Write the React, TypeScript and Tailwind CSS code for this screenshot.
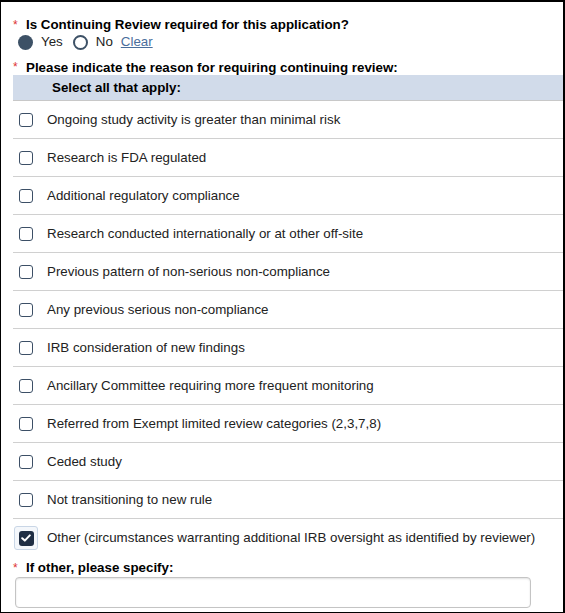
import { useState } from "react";

const reasons = [
  "Ongoing study activity is greater than minimal risk",
  "Research is FDA regulated",
  "Additional regulatory compliance",
  "Research conducted internationally or at other off-site",
  "Previous pattern of non-serious non-compliance",
  "Any previous serious non-compliance",
  "IRB consideration of new findings",
  "Ancillary Committee requiring more frequent monitoring",
  "Referred from Exempt limited review categories (2,3,7,8)",
  "Ceded study",
  "Not transitioning to new rule",
  "Other (circumstances warranting additional IRB oversight as identified by reviewer)",
];

function Check({ on }: { on: boolean }) {
  if (on) {
    return (
      <span className="flex h-[24px] w-[24px] items-center justify-center rounded-[3px] border border-[#c9d6e6] bg-[#f4f7fb]">
        <span className="flex h-[15px] w-[15px] items-center justify-center rounded-[3px] bg-[#1f2e44]">
          <svg width="10" height="8" viewBox="0 0 10 8" fill="none">
            <path d="M1.2 4.2 L3.8 6.6 L8.8 1.4" stroke="white" strokeWidth="2" strokeLinecap="round" strokeLinejoin="round" />
          </svg>
        </span>
      </span>
    );
  }
  return (
    <span className="flex h-[24px] w-[24px] items-center justify-center">
      <span className="h-[14px] w-[14px] rounded-[3px] border-[1.5px] border-[#3c4f66] bg-white" />
    </span>
  );
}

export default function App() {
  const [checked, setChecked] = useState<number[]>([11]);
  const [other, setOther] = useState("");

  const toggle = (i: number) =>
    setChecked((c) => (c.includes(i) ? c.filter((x) => x !== i) : [...c, i]));

  return (
    <div className="h-[613px] w-[565px] overflow-hidden border-t-2 border-l border-r-2 border-b border-black bg-white font-['Liberation_Sans',Arial,sans-serif] text-[13.33px] text-[#222]">
      {/* QUESTION 1 */}
      <div className="flex items-center pl-[12px] pt-[15px] leading-[16px]">
        <span className="w-[13px] text-[#d33] text-[12px]">*</span>
        <span className="font-bold text-black">Is Continuing Review required for this application?</span>
      </div>
      <div className="flex items-center gap-[8px] pl-[17px] pt-[1px] leading-[16px]">
        <span className="flex items-center gap-[8px]">
          <span className="h-[15px] w-[15px] rounded-full bg-[#3d5166]" />
          <span>Yes</span>
        </span>
        <span className="ml-[2px] flex items-center gap-[8px]">
          <span className="h-[15px] w-[15px] rounded-full border-[2.5px] border-[#3d5166] bg-white" />
          <span>No</span>
        </span>
        <span className="text-[#4a6e9c] underline">Clear</span>
      </div>

      {/* QUESTION 2 */}
      <div className="flex items-center pl-[12px] pt-[10px] leading-[15px]">
        <span className="w-[13px] text-[#d33] text-[12px]">*</span>
        <span className="font-bold text-black">Please indicate the reason for requiring continuing review:</span>
      </div>

      <div className="ml-[12px]">
        <div className="flex h-[26px] items-center border-b border-[#c8c8c8] bg-[#d1dbea] pl-[39px] font-bold text-black">
          Select all that apply:
        </div>
        {reasons.map((r, i) => (
          <label
            key={r}
            className={
              "flex h-[38px] cursor-pointer items-center " +
              (i < reasons.length - 1 ? "border-b border-[#d0d0d0]" : "")
            }
            onClick={() => toggle(i)}
          >
            <span className="w-[34px] pl-[1px]">
              <Check on={checked.includes(i)} />
            </span>
            <span>{r}</span>
          </label>
        ))}
      </div>

      {/* OTHER */}
      <div className="flex items-center pl-[12px] pt-[3px] leading-[16px]">
        <span className="w-[13px] text-[#d33] text-[12px]">*</span>
        <span className="font-bold text-black">If other, please specify:</span>
      </div>
      <div className="pl-[14px] pt-[1px]">
        <input
          value={other}
          onChange={(e) => setOther(e.target.value)}
          className="h-[31px] w-[516px] rounded-[4px] border border-[#c4c4c4] bg-white px-2 shadow-[inset_0_1px_2px_rgba(0,0,0,0.12)] outline-none"
        />
      </div>
    </div>
  );
}
